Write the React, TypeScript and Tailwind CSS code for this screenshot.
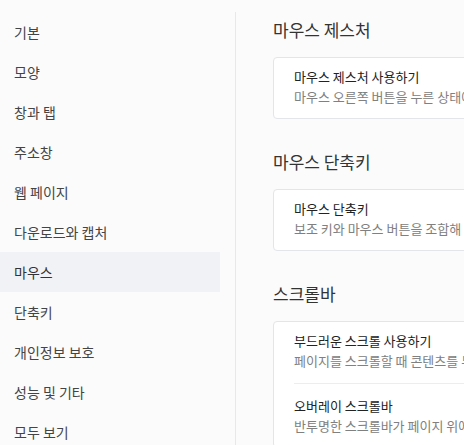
import React from "react";

const navItems = [
  "기본",
  "모양",
  "창과 탭",
  "주소창",
  "웹 페이지",
  "다운로드와 캡처",
  "마우스",
  "단축키",
  "개인정보 보호",
  "성능 및 기타",
  "모두 보기",
];

type Item = { title: string; desc: string };

const sections: { heading: string; items: Item[] }[] = [
  {
    heading: "마우스 제스처",
    items: [
      {
        title: "마우스 제스처 사용하기",
        desc: "마우스 오른쪽 버튼을 누른 상태에서 마우스를 움직여 명령을 실행합니다.",
      },
    ],
  },
  {
    heading: "마우스 단축키",
    items: [
      {
        title: "마우스 단축키",
        desc: "보조 키와 마우스 버튼을 조합해 명령을 실행합니다.",
      },
    ],
  },
  {
    heading: "스크롤바",
    items: [
      {
        title: "부드러운 스크롤 사용하기",
        desc: "페이지를 스크롤할 때 콘텐츠를 부드럽게 이동합니다.",
      },
      {
        title: "오버레이 스크롤바",
        desc: "반투명한 스크롤바가 페이지 위에 표시됩니다.",
      },
    ],
  },
];

export default function App() {
  return (
    <div
      className="w-[464px] h-[445px] overflow-hidden bg-[#fbfbfc] flex items-start pt-3"
      style={{ fontFamily: '"Noto Sans CJK KR", "Noto Sans", sans-serif' }}
    >
      <nav className="w-[220px] shrink-0 flex flex-col">
        {navItems.map((label) => (
          <div
            key={label}
            className={
              label === "마우스"
                ? "h-10 shrink-0 flex items-center pl-[14px] text-[14px] text-[#333] bg-[#f1f2f6]"
                : "h-10 shrink-0 flex items-center pl-[14px] text-[14px] text-[#444]"
            }
          >
            {label}
          </div>
        ))}
      </nav>
      <div className="w-[15px] shrink-0" />
      <main className="flex-1 self-stretch border-l border-[#e8e8ea] pl-[37px] pt-[6px] min-w-0 overflow-hidden">
        {sections.map((s, si) => (
          <section key={s.heading} className={si === 0 ? "" : "mt-[31px]"}>
            <h2 className="text-[17px] leading-[24px] text-[#333] mb-[15px] whitespace-nowrap">
              {s.heading}
            </h2>
            <div className="w-[400px] bg-white border border-[#e3e5e9] rounded-[4px]">
              {s.items.map((it, ii) => (
                <div
                  key={it.title}
                  className={ii === 0 ? "pl-5 pt-[9px] pb-[11px]" : "pl-5"}
                >
                  {ii > 0 && <div className="h-px bg-[#ebedf0] mt-[1px]" />}
                  <div className={ii > 0 ? "pt-[12px] pb-[11px]" : ""}>
                    <div className="text-[13px] leading-[20px] text-[#222] whitespace-nowrap">
                      {it.title}
                    </div>
                    <div className="text-[13px] leading-[20px] text-[#808080] whitespace-nowrap">
                      {it.desc}
                    </div>
                  </div>
                </div>
              ))}
            </div>
          </section>
        ))}
      </main>
    </div>
  );
}
